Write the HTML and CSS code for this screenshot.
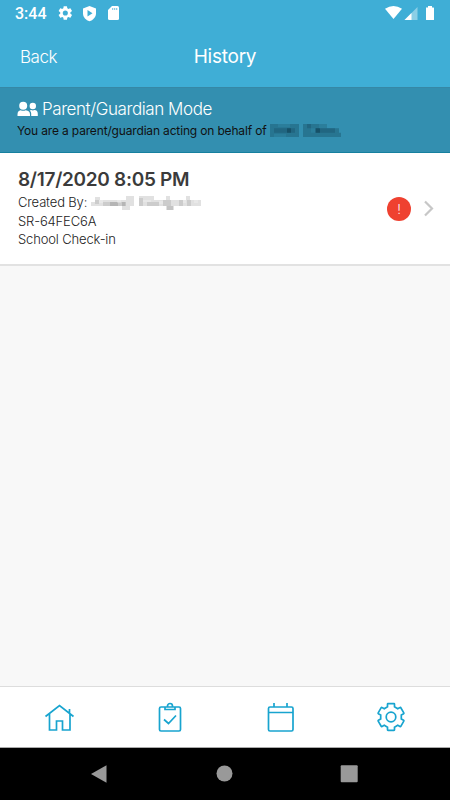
FILE: index.html
```html
<!DOCTYPE html>
<html lang="en">
<head>
<meta charset="utf-8">
<title>History</title>
<link rel="stylesheet" href="styles.css">
</head>
<body>
<div class="app">
  <header class="top">
    <div class="status">
      <span class="clock">3:44</span>
      <svg class="status-left" width="64" height="18" viewBox="0 0 64 18">
        <path fill="#fff" transform="translate(.8 .5) scale(.71)" d="M19.140 12.940c.04-.3.060-.61.060-.94 0-.32-.02-.64-.07-.94l2.030-1.580a.49.49 0 0 0 .12-.61l-1.920-3.320a.49.49 0 0 0-.59-.22l-2.390.96c-.5-.38-1.030-.7-1.620-.94l-.36-2.540a.48.48 0 0 0-.48-.41h-3.840c-.24 0-.43.17-.47.41l-.36 2.540c-.59.24-1.130.57-1.620.94l-2.390-.96a.48.48 0 0 0-.59.22L2.740 8.870c-.12.21-.08.47.12.61l2.030 1.580c-.05.3-.09.63-.09.94s.02.64.07.94l-2.030 1.580a.49.49 0 0 0-.12.61l1.920 3.320c.12.22.37.29.59.22l2.390-.96c.5.38 1.030.7 1.620.94l.36 2.540c.05.24.24.41.48.41h3.840c.24 0 .44-.17.47-.41l.36-2.540c.59-.24 1.130-.56 1.620-.94l2.390.96c.22.08.47 0 .59-.22l1.920-3.320a.48.48 0 0 0-.12-.61zM12 15.600a3.600 3.600 0 1 1 0-7.200 3.600 3.600 0 0 1 0 7.200z"/>
        <path fill="#fff" d="M33.500 2l6.500 2.500v5c0 3.700-3 6.700-6.500 7.800-3.500-1.100-6.500-4.100-6.500-7.800v-5z"/>
        <path fill="#3faed6" d="M31.500 6v6.500l5-3.200z"/>
        <path fill="#fff" d="M56 2h5.500q1.500 0 1.500 1.500v11q0 1.500-1.500 1.500h-8q-1.500 0-1.500-1.500v-8.500z"/>
        <path stroke="#3faed6" stroke-opacity=".6" stroke-width="2" stroke-dasharray="1.300 .7" d="M56 5h6"/>
      </svg>
      <svg class="status-right" width="52" height="18" viewBox="0 0 52 18">
        <path fill="#fff" d="M2 4.700q8.500-5.500 17 0L10.500 15z"/>
        <path fill="#8ccfe6" d="M34.500 3v13H21.500z"/><path fill="#fff" d="M28.500 9v7h-7z"/>
        <path fill="#fff" d="M43 3.500h2V2h4v1.500h1.500q.5 0 .5.500v11.500q0 .5-.5.500h-7q-.5 0-.5-.5z"/>
      </svg>
    </div>
    <nav class="bar"><a class="back">Back</a><h1 class="title">History</h1></nav>
  </header>
  <section class="banner">
    <div class="mode">
      <svg class="people" width="21" height="16" viewBox="0 0 21 16" fill="#fff"><circle cx="6.200" cy="4.700" r="4"/><path d="M.5 15v-1.500Q.5 9.800 3.700 9.300q2.500 1 5 0Q13 9.800 13 13.500V15z"/><circle cx="15.800" cy="5" r="3.200"/><path d="M14.200 15v-2.500q0-2-1.500-2.700.7-.8 1.500-.8 1.600.8 3.200 0 3.400.2 3.400 3.700V15z"/></svg>
      <span>Parent/Guardian Mode</span>
    </div>
    <p class="acting"><span>You are a parent/guardian acting on behalf of</span>
      <svg class="masked-child" width="72" height="13" viewBox="0 0 72 12" preserveAspectRatio="none" fill="#082f40">
        <path fill-opacity=".27" d="M0 0h29v12H0zM33 0h24v4h12v4h2v4H33z"/>
        <path fill-opacity=".2" d="M4 4h21v4H4zM37 0h4v4h-4zM45 4h20v4H45z"/>
        <path fill-opacity=".4" d="M17 4h4v4h-4zM46 4h4v4h-4z"/>
        <path fill="#338fb0" fill-opacity=".35" d="M8 0h12v3H8zM41 4h4v4h-4zM49 0h8v4h-8zM4 9h12v3H4z"/>
      </svg>
    </p>
  </section>
  <section class="record">
    <div class="details">
      <h2 class="date">8/17/2020 8:05 PM</h2>
      <p class="line created"><span>Created By:</span>
        <svg class="masked-author" width="110" height="15" viewBox="0 0 110 15" fill="#777">
          <path fill-opacity=".22" d="M4 1h5v3h26V0h8v10h-4v4h-8v-4H0V6h4zM48 0h15v4h12V0h4v4h16V0h4v4h11v6H83v4h-8v-4H48z"/>
          <path fill-opacity=".2" d="M4 4h4v4H4zM12 6h22v4H12zM48 2h4v8h-4zM56 6h12v4H56zM72 4h8v6h-8zM88 4h4v6h-4zM96 4h4v6h-4z"/>
          <path fill-opacity=".27" d="M19 6h8v4h-8zM31 6h4v4h-4zM76 10h6v4h-6z"/>
          <path fill="#fff" fill-opacity=".25" d="M8 4h4v3H8zM26 4h4v3h-4zM52 4h8v2h-8zM68 5h4v3h-4zM92 4h3v3h-3zM103 4h4v3h-4z"/>
        </svg>
      </p>
      <p class="line code">SR-64FEC6A</p>
      <p class="line kind">School Check-in</p>
    </div>
    <span class="alert">!</span>
    <svg class="chevron" width="12" height="18" viewBox="0 0 12 18"><path d="M2 1.500L9 8.500 2 15.500" fill="none" stroke="#c7c7c7" stroke-width="2.200"/></svg>
  </section>
  <main class="empty"></main>
  <nav class="tabs">
    <svg viewBox="0 0 32 32"><path d="M2.500 15.500L16.500 4.500l14 11M6.500 13v16h7v-9h6v9h7.500V13M26.500 12.500V8"/></svg>
    <svg viewBox="0 0 32 32"><rect x="5.500" y="6" width="21" height="24" rx="1.500"/><path d="M11 6v2.500h10V6M13.500 6V5a2.500 2.500 0 0 1 5 0v1M10 18.500l4.500 4 7.500-8"/></svg>
    <svg viewBox="0 0 32 32"><rect x="4.500" y="6" width="24.500" height="24" rx="1.500"/><path d="M4.500 11.500h24.500M10 6V2M23 6V2"/></svg>
    <svg viewBox="0 0 32 32"><circle cx="16" cy="16" r="4.800"/><path d="M13 2.700h6q.5 0 .5.600v2.500l3.200 1.900L25 6.500q.5-.3.800.2l3 5.200q.3.500-.2.800L26.300 14v4l2.300 1.300q.5.300.2.800l-3 5.200q-.3.500-.8.200l-2.300-1.200-3.200 1.900v2.500q0 .6-.5.600h-6q-.5 0-.5-.6v-2.500l-3.200-1.900L7 25.500q-.5.300-.8-.2l-3-5.200q-.3-.5.200-.8L5.700 18v-4l-2.300-1.300q-.5-.3-.2-.8l3-5.200q.3-.5.800-.2l2.300 1.200 3.200-1.900V3.300q0-.6.500-.6z"/></svg>
  </nav>
  <footer class="system">
    <svg viewBox="0 0 20 20"><path d="M2 10L17.500 1.300v17.400z"/></svg>
    <svg viewBox="0 0 20 20"><circle cx="10.500" cy="9.500" r="8"/></svg>
    <svg viewBox="0 0 20 20"><rect x="1.700" y="1.300" width="17" height="17" rx="1"/></svg>
  </footer>
</div>
</body>
</html>
```
FILE: styles.css
```css
*{box-sizing:border-box}
body,h1,h2,p{margin:0}
body{font-family:Inter,sans-serif;background:#f8f8f8}
.app{width:450px;height:800px;display:flex;flex-direction:column;overflow:hidden}
.top{height:87px;background:#3faed6;color:#fff}
.status{height:30px;display:flex;padding:4px 15px 0 15px}
.clock{font:500 16px/20px Roboto,sans-serif;width:41px}
.status-right{margin-left:auto}
.bar{height:53px;display:grid;grid-template-columns:1fr 1fr 1fr;align-items:center;padding:0 20px}
.back{font-size:17px;font-weight:300;letter-spacing:-.45px}
.title{font-size:19px;font-weight:400;text-align:center;letter-spacing:-.25px;line-height:23px;margin-top:-1px}
.banner{height:66px;background:#338fb0;border-top:1px solid #3688a6;border-bottom:1px solid #16809f;padding:10px 17px}
.mode{height:22px;display:flex;align-items:center;gap:4px;color:#fff;font-size:17px;font-weight:300;letter-spacing:-.42px}
.acting{display:flex;align-items:center;height:20px;font-size:12px;color:#111;letter-spacing:-.16px}
.masked-child{margin-left:3px}
.record{height:113px;background:#fff;border-bottom:2px solid #e2e2e2;display:flex;align-items:center;padding:0 15px 0 18px}
.details{flex:1;height:100%;padding-top:15px}
.date{font-size:19px;line-height:24px;font-weight:600;color:#3b3b3b;letter-spacing:-.3px}
.line{height:18.500px;display:flex;align-items:center;font-size:13px;font-weight:300;color:#222;letter-spacing:-.15px}
.created{height:19.500px;padding-top:1px}
.masked-author{margin:2px 0 0 4px}
.alert{width:24px;height:24px;border-radius:50%;background:#ef4130;color:#fff;text-align:center;font-size:13px;font-weight:300;line-height:24px}
.chevron{margin-left:12px}
.empty{flex:1}
.tabs{height:62px;background:#fff;border-top:1px solid #ddd;border-bottom:1px solid #aaa;display:flex;justify-content:space-between;padding:14px 43px}
.tabs svg{width:32px;height:32px;fill:none;stroke:#18a4cf;stroke-width:1.700}
.system{height:52px;background:#000;display:flex;justify-content:space-between;align-items:center;padding:0 91px 0 89px}
.system svg{width:20px;height:20px;fill:#999}
```
